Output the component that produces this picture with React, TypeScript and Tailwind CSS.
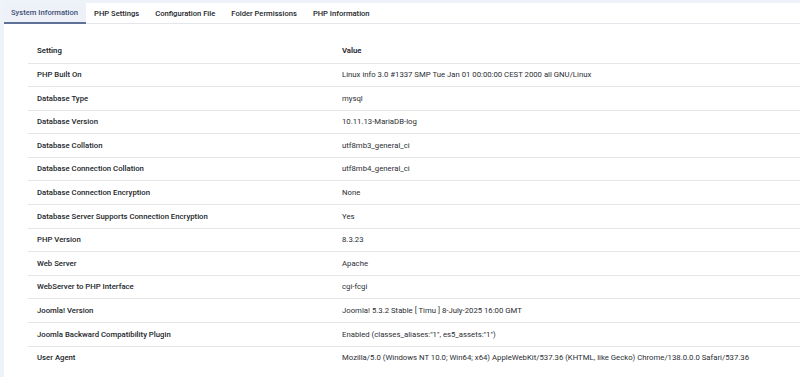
import React from "react";

const rows: [string, string][] = [
  ["PHP Built On", "Linux info 3.0 #1337 SMP Tue Jan 01 00:00:00 CEST 2000 all GNU/Linux"],
  ["Database Type", "mysql"],
  ["Database Version", "10.11.13-MariaDB-log"],
  ["Database Collation", "utf8mb3_general_ci"],
  ["Database Connection Collation", "utf8mb4_general_ci"],
  ["Database Connection Encryption", "None"],
  ["Database Server Supports Connection Encryption", "Yes"],
  ["PHP Version", "8.3.23"],
  ["Web Server", "Apache"],
  ["WebServer to PHP Interface", "cgi-fcgi"],
  ["Joomla! Version", "Joomla! 5.3.2 Stable [ Timu ] 8-July-2025 16:00 GMT"],
  ["Joomla Backward Compatibility Plugin", 'Enabled (classes_aliases:"1", es5_assets:"1")'],
  ["User Agent", "Mozilla/5.0 (Windows NT 10.0; Win64; x64) AppleWebKit/537.36 (KHTML, like Gecko) Chrome/138.0.0.0 Safari/537.36"],
];

const tabs = ["System Information", "PHP Settings", "Configuration File", "Folder Permissions", "PHP Information"];

export default function App() {
  return (
    <div
      className="w-[800px] h-[377px] bg-[#eef3fa] pt-[3px] pl-[4px] overflow-hidden"
      style={{ fontFamily: "Roboto, 'Noto Sans', sans-serif" }}
    >
      <div className="bg-white h-full">
        <div className="flex border-b border-[#e3e6ea] h-[21px]">
          {tabs.map((t, i) => (
            <div
              key={t}
              className={
                i === 0
                  ? "pl-[7px] pr-[8px] pt-px flex items-center text-[7.6px] font-medium text-[#3d4f77] bg-[#eef2f8] border-b-2 border-[#5f7196] -mb-px"
                  : "px-[8px] pt-px flex items-center text-[7.6px] font-medium text-[#22262a]"
              }
            >
              {t}
            </div>
          ))}
        </div>
        <div className="pl-[24px] pt-[16px]">
          <table className="w-full border-collapse text-[7.75px] text-[#22262a]">
            <thead>
              <tr className="h-[23px] border-b border-[#e4e6ea]">
                <th className="text-left font-semibold pl-[9px] w-[305px]">Setting</th>
                <th className="text-left font-semibold pl-[9px]">Value</th>
              </tr>
            </thead>
            <tbody>
              {rows.map(([k, v], i) => (
                <tr
                  key={k}
                  className={i === rows.length - 1 ? "h-[23.6px]" : "h-[23.6px] border-b border-[#e4e6ea]"}
                >
                  <td className="pl-[9px] font-medium whitespace-nowrap">{k}</td>
                  <td className="pl-[9px] whitespace-nowrap text-[#2a2e33]">{v}</td>
                </tr>
              ))}
            </tbody>
          </table>
        </div>
      </div>
    </div>
  );
}
